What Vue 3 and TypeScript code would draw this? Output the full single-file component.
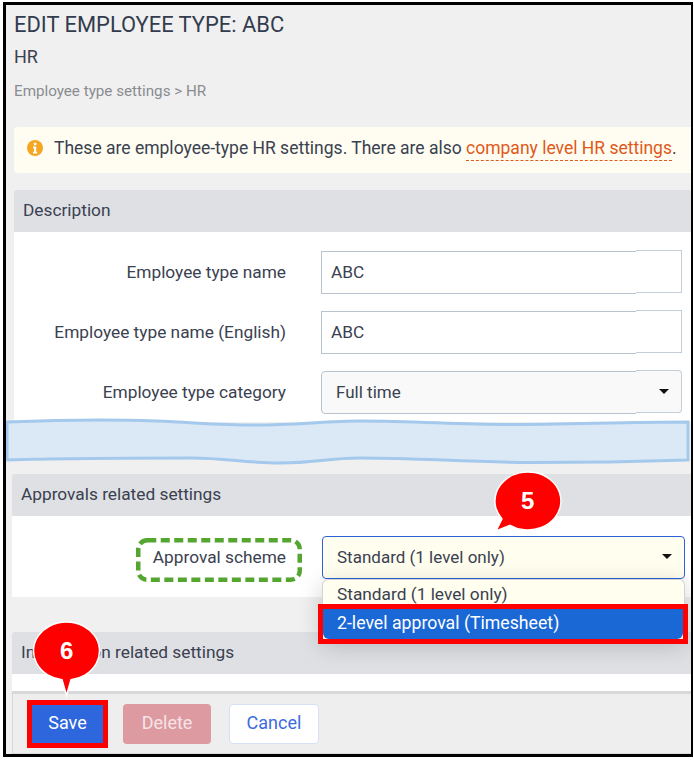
<script setup lang="ts">
const basicRows = [
  { label: 'Employee type name', value: 'ABC' },
  { label: 'Employee type name (English)', value: 'ABC' },
]
</script>

<template>
  <div class="frame">
    <div class="page">
      <h1 class="title">EDIT EMPLOYEE TYPE: ABC</h1>
      <h2 class="subtitle">HR</h2>
      <p class="crumb">Employee type settings &gt; HR</p>

      <div class="notice">
        <svg class="info" viewBox="0 0 16 16" width="16" height="16">
          <circle cx="8" cy="8" r="8" fill="#f5a623" />
          <rect x="6.900" y="2.800" width="2.400" height="2.400" rx=".5" fill="#fff" />
          <path d="M6 6.600h3.200v5.200h1v1.600H6v-1.600h1V8.200H6z" fill="#fff" />
        </svg>
        <span>These are employee-type HR settings. There are also <a class="link">company level HR settings</a>.</span>
      </div>

      <section class="panel">
        <div class="panel-head">Description</div>
        <div class="panel-body first">
          <div v-for="row in basicRows" :key="row.label" class="row">
            <label class="label">{{ row.label }}</label>
            <div class="input seam">{{ row.value }}</div>
          </div>
          <div class="row">
            <label class="label">Employee type category</label>
            <div class="input select seam">
              <span>Full time</span>
              <i class="caret"></i>
            </div>
          </div>
        </div>
      </section>

      <section class="panel shifted second-panel">
        <div class="panel-head">Approvals related settings</div>
        <div class="panel-body second">
          <div class="row approval">
            <label class="label">
              <span class="dashed">
                Approval scheme
                <svg class="dash-box" viewBox="0 0 166 44" width="166" height="44">
                  <rect x="2.250" y="2.250" width="161.500" height="39.500" rx="9" fill="none" stroke="#54a630" stroke-width="4.500" stroke-dasharray="9 4.500" />
                </svg>
              </span>
            </label>
            <div class="input select focus">
              <span>Standard (1 level only)</span>
              <i class="caret"></i>
            </div>
            <div class="menu">
              <div class="opt">Standard (1 level only)</div>
              <div class="opt sel">2-level approval (Timesheet)</div>
            </div>
          </div>
        </div>
      </section>

      <section class="panel shifted third">
        <div class="panel-head">Information related settings</div>
        <div class="panel-body tail"></div>
      </section>

      <footer class="foot">
        <button class="btn save">Save</button>
        <button class="btn del">Delete</button>
        <button class="btn cancel">Cancel</button>
      </footer>
    </div>

    <svg class="wave" viewBox="0 0 684 50" width="684" height="50">
      <path d="M1 6 C50 4 100 3 150 5 C190 6.500 210 9 250 9 C290 9 320 5 355 5 C410 5 450 8.500 500 8.500 C560 8.500 620 6 682 6 L682 44 C620 46 580 46.500 525 46.500 C460 46 410 42 355 42 C320 42 310 47 275 47 C240 47 220 42 185 42 C120 42 60 42 1 44 Z"
        fill="#dbe8f6" stroke="#a4c9ec" stroke-width="3" />
    </svg>

    <svg class="bubble b5" viewBox="0 0 72 64" width="72" height="64">
      <path d="M10 48.900 A33 29 0 1 1 18 55.300 L4 61 Z" fill="#f00" stroke="#fff" stroke-width="1.500" />
    </svg>
    <span class="num n5">5</span>
    <svg class="bubble b6" viewBox="0 0 72 78" width="72" height="78">
      <path d="M40 59.700 A33 29 0 1 0 31 59.700 L35.500 75.500 Z" fill="#f00" stroke="#fff" stroke-width="1.500" />
    </svg>
    <span class="num n6">6</span>
  </div>
</template>

<style>
html, body { margin: 0; background: #fff; }
</style>

<style scoped>
.frame {
  position: relative;
  box-sizing: border-box;
  width: 690px;
  height: 755px;
  margin: 2px 0 0 3px;
  border: 3px solid #000;
  border-right-width: 2px;
  overflow: hidden;
  font-family: Roboto, "Liberation Sans", sans-serif;
  color: #3a4150;
}
.page {
  box-sizing: border-box;
  height: 100%;
  background: #f0f0f0;
  padding: 7px 0 0 8px;
}
.title { margin: 0; font-size: 21.900px; line-height: 26px; font-weight: 400; color: #333c4e; }
.subtitle { margin: 8px 0 0; font-size: 18px; line-height: 22px; font-weight: 400; }
.crumb { margin: 13px 0 0; font-size: 15.200px; line-height: 20px; color: #8a8c90; }
.notice {
  box-sizing: border-box;
  margin-top: 26px;
  height: 46px;
  display: flex;
  align-items: center;
  gap: 11px;
  padding: 0 0 4px 13px;
  background: #fffdf1;
  border-radius: 3px 0 0 3px;
  font-size: 17.500px;
  white-space: nowrap;
}
.info { flex: none; }
.link { color: #e0591a; border-bottom: 1px dashed #e0591a; padding-bottom: 2px; }
.panel { margin-top: 17px; }
.panel-head {
  box-sizing: border-box;
  height: 42px;
  display: flex;
  align-items: center;
  padding: 0 0 2px 9px;
  background: #dfe0e4;
  border-radius: 3px 0 0 0;
  font-size: 17.300px;
}
.panel-body { background: #fff; box-sizing: border-box; }
.first { height: 190px; padding-top: 19px; }
.second { height: 81px; padding-top: 20px; }
.tail { height: 17px; }
.shifted { margin-left: -2px; }
.second-panel { margin-top: 52px; }
.third { margin-top: 35px; }
.row {
  display: flex;
  align-items: center;
  height: 43px;
  margin-bottom: 17px;
}
.label {
  flex: none;
  width: 272px;
  padding-bottom: 2px;
  text-align: right;
  font-size: 17.300px;
  color: #3a4150;
}
.input {
  position: relative;
  box-sizing: border-box;
  margin-left: 35px;
  width: 361px;
  height: 43px;
  display: flex;
  align-items: center;
  padding: 0 0 2px 9px;
  background: #fff;
  border: 1px solid #b9c4d1;
  font-size: 17.300px;
}
.seam::after {
  content: "";
  position: absolute;
  right: -1px;
  top: -2px;
  bottom: 0;
  width: 46px;
  box-sizing: border-box;
  background: #fff;
  border: 1px solid #c4ced9;
  border-left: 0;
  box-shadow: 0 1px 0 #fff;
  z-index: 0;
}
.select {
  justify-content: space-between;
  padding: 0 12px 2px 14px;
  background: #f9f9f9;
  border-radius: 4px;
  font-size: 17px;
}
.select.seam::after { background: #f9f9f9; border-radius: 0 4px 4px 0; }
.select .caret { position: relative; z-index: 1; }
.caret { width: 0; height: 0; border: 5px solid transparent; border-top-color: #111; border-bottom: 0; }
.approval { position: relative; }
.approval .label { width: 274px; }
.approval .input { width: 363px; margin-left: 36px; }
.focus { background: #fffeef; border-color: #2b62d9; }
.dashed { position: relative; display: inline-block; }
.dash-box { position: absolute; left: -17px; top: -9px; }
.menu {
  position: absolute;
  left: 310px;
  top: 43px;
  width: 363px;
  z-index: 2;
  box-sizing: border-box;
  box-shadow: 0 6px 24px rgba(0,0,0,.2);
  border: 1px solid #d4d4d4;
  border-bottom: 0;
  border-radius: 6px 6px 0 0;
  font-size: 17.300px;
  background: #fffeef;
}
.opt { height: 29px; line-height: 29px; padding-left: 14px; }
.sel {
  position: relative;
  height: 30px;
  line-height: 28px;
  width: 346px;
  background: #1a67d6;
  color: #fff;
  border-radius: 0 0 6px 6px;
  font-size: 17.700px;
}
.sel::after {
  content: "";
  position: absolute;
  inset: -5px;
  border: 5px solid #f00;
}
.foot {
  box-sizing: border-box;
  margin: 0 0 0 -2px;
  height: 63px;
  background: #eeeeee;
  border-top: 3px solid #d8d8d8;
  border-left: 1px solid #d8d8d8;
  border-bottom: 1px solid #d8d8d8;
  display: flex;
  align-items: center;
  gap: 18px;
  padding-left: 19px;
}
.btn {
  box-sizing: border-box;
  height: 40px;
  border-radius: 4px;
  font: 18px Roboto, "Liberation Sans", sans-serif;
  border: 1px solid transparent;
  padding: 0 0 3px;
}
.save { width: 71px; height: 38px; background: #2e66de; color: #fff; outline: 5px solid #f00; border-radius: 0; margin-right: 2px; }
.del { width: 88px; background: #de9aa1; color: #f5e4e6; }
.cancel { width: 90px; background: #fff; color: #3d6be0; border-color: #d5e0f5; }
.wave { position: absolute; left: 0; top: 411px; }
.bubble { position: absolute; }
.b5 { left: 486px; top: 465px; }
.b6 { left: 25px; top: 615px; }
.num { position: absolute; color: #fff; font: 700 24px/28px "Liberation Sans", sans-serif; }
.n5 { left: 515px; top: 482px; }
.n6 { left: 54px; top: 632px; }
</style>
